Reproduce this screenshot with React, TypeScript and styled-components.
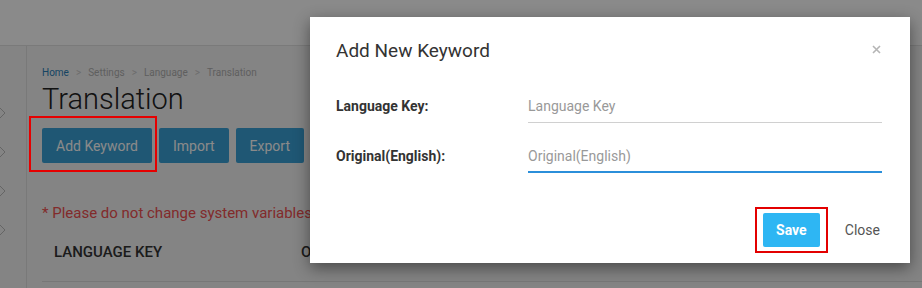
import styled, { createGlobalStyle } from "styled-components";

const Global = createGlobalStyle`
    html, body {
        margin: 0;
        padding: 0;
        width: 922px;
        height: 288px;
        overflow: hidden;
        font-family: Roboto, "Liberation Sans", sans-serif;
        background: #f4f4f4;
    }
`;

const Page = styled.div`
    position: relative;
    width: 922px;
    height: 288px;
    display: flex;
    flex-direction: column;
`;

const Header = styled.div`
    height: 45px;
    flex-shrink: 0;
    background: #ffffff;
    border-bottom: 1px solid #e2e2e2;
`;

const Body = styled.div`
    flex: 1;
    display: flex;
`;

const Sidebar = styled.div`
    width: 27px;
    flex-shrink: 0;
    border-right: 1px solid #e0e0e0;
    display: flex;
    flex-direction: column;
    gap: 25px;
    padding-top: 60px;
    box-sizing: border-box;
`;

const Chevron = styled.svg`
    width: 8px;
    height: 14px;
    margin-left: -2px;
`;

const Content = styled.div`
    flex: 1;
    padding: 21px 0 0 15px;
`;

const Crumbs = styled.div`
    display: flex;
    gap: 7px;
    font-size: 10px;
    line-height: 12px;
`;

const Crumb = styled.span<{ $active?: boolean }>`
    color: ${(p) => (p.$active ? "#2a7fb8" : "#b0b0b0")};
`;

const Sep = styled.span`
    color: #c8c8c8;
`;

const Title = styled.h1`
    margin: 4px 0 0;
    font-size: 29px;
    font-weight: 300;
    color: #222;
    line-height: 32px;
`;

const Toolbar = styled.div`
    display: flex;
    gap: 7px;
    margin-top: 13px;
`;

// red annotation box drawn above the dimming overlay
const Highlight = styled.div`
    position: relative;
    &::after {
        content: "";
        position: absolute;
        z-index: 2;
        left: -13px;
        top: -12px;
        right: -5px;
        bottom: -9px;
        border: 2px solid #e60000;
    }
`;

const PageButton = styled.div`
    height: 35px;
    padding: 0 14px;
    background: #3aa1d6;
    color: #fff;
    font-size: 14px;
    display: flex;
    align-items: center;
    border-radius: 2px;
`;

const Notice = styled.div`
    margin-top: 41px;
    font-size: 15px;
    color: #f05050;
    white-space: nowrap;
`;

const TableHead = styled.div`
    margin-top: 21px;
    display: flex;
    padding: 0 0 0 12px;
    font-size: 15px;
    font-weight: 500;
    color: #333;
    height: 38px;
    border-bottom: 1px solid #dddddd;
`;

const HeadCell = styled.div<{ $w: number }>`
    width: ${(p) => p.$w}px;
`;

const Overlay = styled.div`
    position: absolute;
    inset: 0;
    z-index: 1;
    background: rgba(0, 0, 0, 0.46);
`;

const Modal = styled.div`
    position: absolute;
    z-index: 3;
    left: 310px;
    top: 17px;
    width: 600px;
    height: 246px;
    background: #fff;
    box-shadow: 0 5px 15px rgba(0, 0, 0, 0.45);
    box-sizing: border-box;
    padding: 23px 28px 0 26px;
    display: flex;
    flex-direction: column;
`;

const ModalHead = styled.div`
    display: flex;
    justify-content: space-between;
    align-items: center;
`;

const ModalTitle = styled.div`
    font-size: 19px;
    color: #333;
    line-height: 22px;
`;

const CloseX = styled.svg`
    width: 9px;
    height: 9px;
    margin-right: 1px;
    margin-top: -4px;
`;

const Form = styled.div`
    margin-top: 30px;
    display: flex;
    flex-direction: column;
    gap: 19px;
`;

const Row = styled.div`
    display: flex;
    align-items: flex-start;
`;

const Label = styled.div`
    width: 192px;
    font-size: 14px;
    font-weight: bold;
    color: #333;
    line-height: 22px;
    padding-top: 3px;
`;

const Input = styled.div<{ $focus?: boolean }>`
    flex: 1;
    height: ${(p) => (p.$focus ? 26 : 27)}px;
    padding-top: 3px;
    font-size: 14px;
    color: #999;
    line-height: 22px;
    border-bottom: ${(p) => (p.$focus ? "2px solid #2b8fda" : "1px solid #d0d0d0")};
`;

const Footer = styled.div`
    margin-top: 34px;
    display: flex;
    justify-content: flex-end;
    align-items: center;
    gap: 17px;
    padding-right: 2px;
`;

const SaveWrap = styled.div`
    padding: 4px 6px;
    border: 2px solid #e30000;
    display: flex;
`;

const SaveButton = styled.button`
    width: 57px;
    height: 34px;
    border: none;
    border-radius: 2px;
    background: #2eb6f3;
    color: #fff;
    font-family: Roboto, "Liberation Sans", sans-serif;
    font-size: 14px;
    font-weight: bold;
`;

const CloseLink = styled.div`
    font-size: 14px;
    color: #555;
`;

const App = () => (
    <Page>
        <Global />
        <Header />
        <Body>
            <Sidebar>
                {[0, 1, 2, 3].map((i) => (
                    <Chevron key={i} viewBox="0 0 8 14">
                        <path d="M1 1l6 6-6 6" fill="none" stroke="#bbb" strokeWidth="1" />
                    </Chevron>
                ))}
            </Sidebar>
            <Content>
                <Crumbs>
                    <Crumb $active>Home</Crumb>
                    <Sep>&gt;</Sep>
                    <Crumb>Settings</Crumb>
                    <Sep>&gt;</Sep>
                    <Crumb>Language</Crumb>
                    <Sep>&gt;</Sep>
                    <Crumb>Translation</Crumb>
                </Crumbs>
                <Title>Translation</Title>
                <Toolbar>
                    <Highlight>
                        <PageButton>Add Keyword</PageButton>
                    </Highlight>
                    <PageButton>Import</PageButton>
                    <PageButton>Export</PageButton>
                </Toolbar>
                <Notice>* Please do not change system variables such as</Notice>
                <TableHead>
                    <HeadCell $w={247}>LANGUAGE KEY</HeadCell>
                    <HeadCell $w={200}>ORIGINAL</HeadCell>
                </TableHead>
            </Content>
        </Body>
        <Overlay />
        <Modal>
            <ModalHead>
                <ModalTitle>Add New Keyword</ModalTitle>
                <CloseX viewBox="0 0 9 9">
                    <path d="M1 1l7 7M8 1l-7 7" stroke="#b5b5b5" strokeWidth="1.6" />
                </CloseX>
            </ModalHead>
            <Form>
                <Row>
                    <Label>Language Key:</Label>
                    <Input>Language Key</Input>
                </Row>
                <Row>
                    <Label>Original(English):</Label>
                    <Input $focus>Original(English)</Input>
                </Row>
            </Form>
            <Footer>
                <SaveWrap>
                    <SaveButton>Save</SaveButton>
                </SaveWrap>
                <CloseLink>Close</CloseLink>
            </Footer>
        </Modal>
    </Page>
);

export default App;
